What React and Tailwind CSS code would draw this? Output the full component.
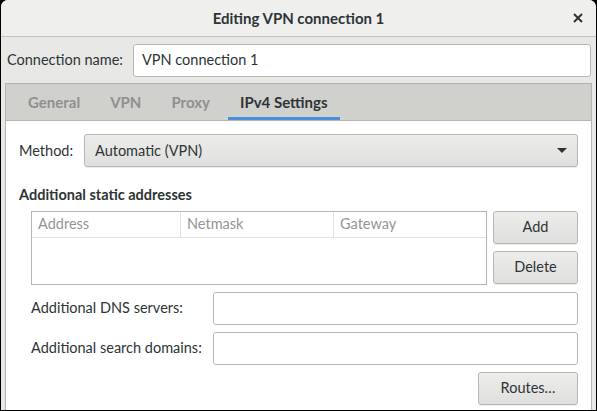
import { useState } from 'react'

const font = { fontFamily: 'Lato, "Noto Sans", sans-serif' }

function Entry({ value = '', className = '' }) {
  return (
    <div
      className={`h-[33px] bg-white border border-[#b8b8b3] rounded-[3px] flex items-center px-[8px] text-[14.5px] text-[#2e3436] ${className}`}
    >
      {value}
    </div>
  )
}

function Button({ children, className = '' }) {
  return (
    <button
      className={`h-[33px] border border-[#b6b6b3] rounded-[3px] bg-gradient-to-b from-[#ededec] to-[#dfdfdd] text-[14.5px] text-[#2e3436] flex items-center justify-center shadow-[0_1px_0_rgba(0,0,0,0.07)] ${className}`}
    >
      {children}
    </button>
  )
}

export default function App() {
  const [tab] = useState('IPv4 Settings')
  const tabs = ['General', 'VPN', 'Proxy', 'IPv4 Settings']

  return (
    <div className="w-[597px] h-[411px] bg-black overflow-hidden" style={font}>
      <div className="w-[595px] h-[410px] ml-[1px] rounded-t-[7px] bg-[#e8e8e7] flex flex-col overflow-hidden">
        {/* header bar */}
        <div className="h-[37px] shrink-0 bg-[#efefee] border-b border-[#c4c2bd] relative flex items-center justify-center">
          <span className="text-[15px] font-bold text-[#2e3436]">Editing VPN connection 1</span>
          <svg
            className="absolute right-[13px] top-[13px]"
            width="10"
            height="10"
            viewBox="0 0 10 10"
          >
            <path d="M1 1L9 9M9 1L1 9" stroke="#2e3436" strokeWidth="2" />
          </svg>
        </div>

        {/* connection name */}
        <div className="h-[46px] shrink-0 flex items-center pl-[6px] pr-[5px]">
          <span className="text-[14.5px] text-[#2e3436] w-[126px]">Connection name:</span>
          <Entry value="VPN connection 1" className="flex-1" />
        </div>

        {/* notebook */}
        <div className="flex-1 mx-[4px] border-x border-t border-[#b6b4b0] flex flex-col">
          <div className="h-[37px] shrink-0 bg-[#d0d0cd] border-b border-[#b6b4b0] flex pl-[7px]">
            {tabs.map((t) => (
              <div
                key={t}
                className={`relative h-full flex items-center px-[15px] text-[15px] font-bold ${
                  t === tab ? 'text-[#2e3436]' : 'text-[#8f9191]'
                }`}
              >
                {t}
                {t === tab && (
                  <div className="absolute left-[3px] right-[3px] bottom-0 h-[3px] bg-[#4a90d9]" />
                )}
              </div>
            ))}
          </div>

          <div className="flex-1 bg-white pl-[13px] pr-[13px] pt-[13px]">
            <div className="flex items-center">
              <span className="text-[14.5px] text-[#2e3436] w-[65px]">Method:</span>
              <Button className="flex-1 !justify-between px-[10px]">
                <span>Automatic (VPN)</span>
                <svg width="10" height="6" viewBox="0 0 10 6">
                  <path d="M0 0H10L5 5Z" fill="#2e3436" />
                </svg>
              </Button>
            </div>

            <div className="mt-[17px] text-[14.5px] font-bold text-[#2e3436]">
              Additional static addresses
            </div>

            <div className="mt-[5px] pl-[12px] flex gap-[6px]">
              <div className="w-[456px] h-[74px] border border-[#b6b4b0] bg-white">
                <div className="h-[26px] flex border-b border-[#e0e0de] text-[14.5px] text-[#929595]">
                  <div className="w-[149px] border-r border-[#e0e0de] pl-[6px] flex items-center">Address</div>
                  <div className="w-[153px] border-r border-[#e0e0de] pl-[6px] flex items-center">Netmask</div>
                  <div className="flex-1 pl-[6px] flex items-center">Gateway</div>
                </div>
              </div>
              <div className="flex-1 flex flex-col gap-[7px]">
                <Button>Add</Button>
                <Button>Delete</Button>
              </div>
            </div>

            <div className="mt-[7px] pl-[12px] flex flex-col gap-[7px]">
              <div className="flex items-center">
                <span className="text-[14.5px] text-[#2e3436] w-[182px]">Additional DNS servers:</span>
                <Entry className="flex-1" />
              </div>
              <div className="flex items-center">
                <span className="text-[14.5px] text-[#2e3436] w-[182px]">Additional search domains:</span>
                <Entry className="flex-1" />
              </div>
              <div className="flex justify-end">
                <Button className="w-[100px]">Routes…</Button>
              </div>
            </div>
          </div>
        </div>
      </div>
    </div>
  )
}
